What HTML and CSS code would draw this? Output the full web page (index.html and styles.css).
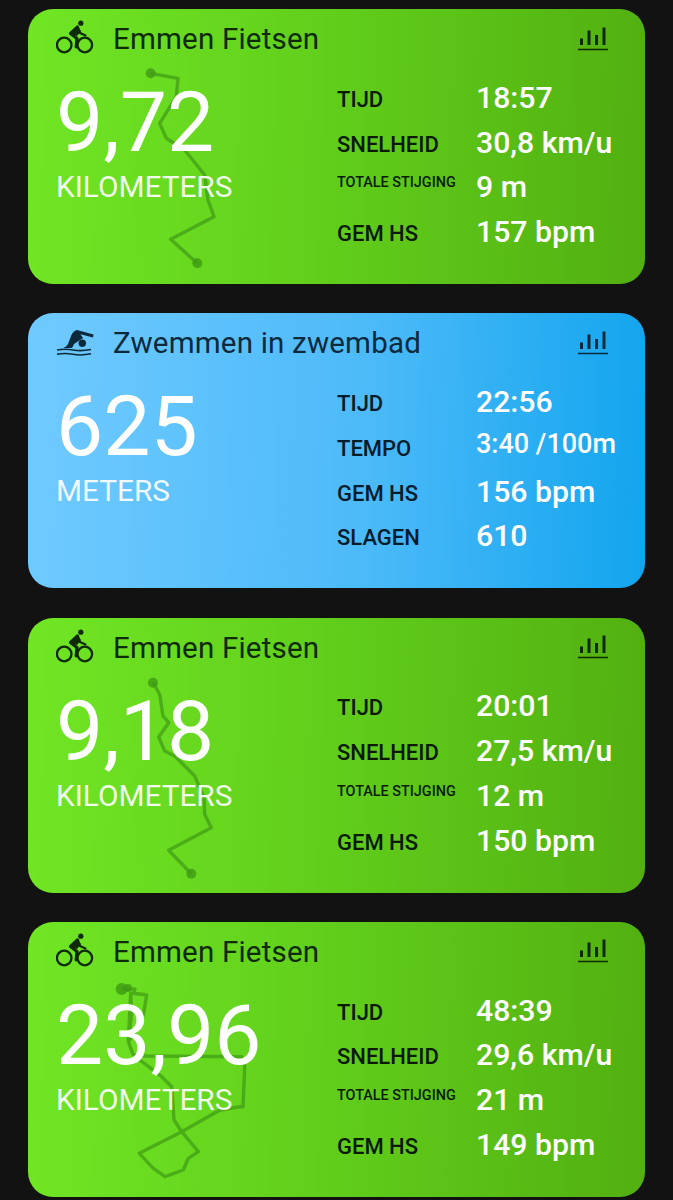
FILE: index.html
```html
<!DOCTYPE html>
<html lang="en">
	<head>
		<meta charset="utf-8">
		<title>Activiteiten</title>
		<link rel="stylesheet" href="styles.css">
	</head>
	<body>
		<svg class="defs" width="0" height="0">
			<symbol id="bike" viewBox="0 0 38 34">
				<circle cx="8.2" cy="25" r="7.3" fill="none" stroke="currentColor" stroke-width="2.3"/>
				<circle cx="28.8" cy="25" r="7.3" fill="none" stroke="currentColor" stroke-width="2.3"/>
				<circle cx="24.8" cy="3.2" r="2.6" fill="currentColor"/>
				<path d="M21.5 7 L14.5 13.5 L21 18.5 L20.2 27" fill="none" stroke="currentColor" stroke-width="3.2" stroke-linejoin="round" stroke-linecap="round"/>
				<path d="M22 7.5 L24 13 L29.5 15.5" fill="none" stroke="currentColor" stroke-width="2.2" stroke-linecap="round" stroke-linejoin="round"/>
				<path d="M21.5 7 L16 14 L21 16 L25 11 Z" fill="currentColor"/>
			</symbol>
			<symbol id="swim" viewBox="0 0 38 34">
				<circle cx="26.3" cy="19.3" r="3.7" fill="currentColor"/>
				<path d="M7.5 24 Q11 22.5 12 20 L15 12 Q17 7 21 6 L37.5 10.5 L37 13.5 L24.5 10.2 L27 14 L18 20 Q17 23 15.5 24 Z" fill="currentColor"/>
				<path d="M1 26 Q9 24.5 17 26 T35 25.5 M1 30.3 Q9 28.8 17 30.3 T35 29.8" fill="none" stroke="currentColor" stroke-width="1.6"/>
			</symbol>
			<symbol id="chart" viewBox="0 0 30 25">
				<path d="M3.5 11.5 V18 M11 3.5 V18 M18.5 8 V18 M26 0.5 V18" fill="none" stroke="currentColor" stroke-width="3"/>
				<path d="M0 22.5 H30" fill="none" stroke="currentColor" stroke-width="1.6"/>
			</symbol>
		</svg>

		<div class="list">

			<div class="card card-bike">
				<svg class="route" viewBox="0 0 617 275">
					<circle cx="122.7" cy="64.3" r="5"/>
					<circle cx="169.3" cy="254.3" r="5"/>
					<polyline points="122.7,64.3 150,69.3 148.3,87.7 131.7,114.3 138.3,129.3 156.7,141 176.7,166 180,191 186,207.7 142.7,230.3 169.3,254.3"/>
				</svg>
				<div class="head">
					<svg class="sport-icon"><use href="#bike"/></svg>
					<span class="title">Emmen Fietsen</span>
					<svg class="chart-icon"><use href="#chart"/></svg>
				</div>
				<div class="main">
					<div class="total">
						<div class="number">9,72</div>
						<div class="unit">KILOMETERS</div>
					</div>
					<div class="stats">
						<span class="label">TIJD</span><span class="value">18:57</span>
						<span class="label">SNELHEID</span><span class="value">30,8 km/u</span>
						<span class="label small">TOTALE STIJGING</span><span class="value">9 m</span>
						<span class="label">GEM HS</span><span class="value">157 bpm</span>
					</div>
				</div>
			</div>

			<div class="card card-swim">
				<div class="head">
					<svg class="sport-icon"><use href="#swim"/></svg>
					<span class="title">Zwemmen in zwembad</span>
					<svg class="chart-icon"><use href="#chart"/></svg>
				</div>
				<div class="main">
					<div class="total">
						<div class="number">625</div>
						<div class="unit">METERS</div>
					</div>
					<div class="stats">
						<span class="label">TIJD</span><span class="value">22:56</span>
						<span class="label">TEMPO</span><span class="value tight">3:40 /100m</span>
						<span class="label">GEM HS</span><span class="value">156 bpm</span>
						<span class="label">SLAGEN</span><span class="value">610</span>
					</div>
				</div>
			</div>

			<div class="card card-bike">
				<svg class="route" viewBox="0 0 617 275">
					<circle cx="125" cy="64.7" r="5"/>
					<circle cx="163.3" cy="255.7" r="5"/>
					<polyline points="125,64.7 131.7,76.3 135,98 140.7,104.7 130.7,119 136.7,133 146.7,138 166.7,158 176,179.7 176.7,196.3 183.3,209.7 140.7,232.3 163.3,255.7"/>
				</svg>
				<div class="head">
					<svg class="sport-icon"><use href="#bike"/></svg>
					<span class="title">Emmen Fietsen</span>
					<svg class="chart-icon"><use href="#chart"/></svg>
				</div>
				<div class="main">
					<div class="total">
						<div class="number">9,18</div>
						<div class="unit">KILOMETERS</div>
					</div>
					<div class="stats">
						<span class="label">TIJD</span><span class="value">20:01</span>
						<span class="label">SNELHEID</span><span class="value">27,5 km/u</span>
						<span class="label small">TOTALE STIJGING</span><span class="value">12 m</span>
						<span class="label">GEM HS</span><span class="value">150 bpm</span>
					</div>
				</div>
			</div>

			<div class="card card-bike">
				<svg class="route" viewBox="0 0 617 275">
					<circle cx="93.7" cy="67" r="6"/>
					<circle cx="100" cy="66" r="4"/>
					<polyline points="93.7,67 107,67 105.3,71.3 118.7,73 115.3,93 106,112 100.3,119.7 103.7,91.3 102.7,71.3 100.3,119.7 105.3,133 133.7,154.7 143.7,164.7 146,198 153.7,209.7 170.3,229.7 160.3,236.3 155.3,248 137,254.7 125.3,246.3 111.3,231.3 153.7,209.7 192,188 212,184.7 215,184.7 216.7,144.7 213.3,134.7 118.7,134 105.3,133"/>
				</svg>
				<div class="head">
					<svg class="sport-icon"><use href="#bike"/></svg>
					<span class="title">Emmen Fietsen</span>
					<svg class="chart-icon"><use href="#chart"/></svg>
				</div>
				<div class="main">
					<div class="total">
						<div class="number">23,96</div>
						<div class="unit">KILOMETERS</div>
					</div>
					<div class="stats">
						<span class="label">TIJD</span><span class="value">48:39</span>
						<span class="label">SNELHEID</span><span class="value">29,6 km/u</span>
						<span class="label small">TOTALE STIJGING</span><span class="value">21 m</span>
						<span class="label">GEM HS</span><span class="value">149 bpm</span>
					</div>
				</div>
			</div>

		</div>
	</body>
</html>
```
FILE: styles.css
```css
html, body {
	margin: 0;
	height: 1200px;
	overflow: hidden;
	background-color: #121212;
	font-family: Roboto, sans-serif;
}

.defs {
	position: absolute;
}

.list {
	display: flex;
	flex-direction: column;
	gap: 29.3px;
	padding: 9px 28px 0;
}

.card {
	position: relative;
	box-sizing: border-box;
	flex: none;
	height: 275px;
	border-radius: 25px;
	padding: 0 28px;
	overflow: hidden;
}

.card-bike {
	background: linear-gradient(92deg, #70e624 0%, #62d01c 45%, #52b011 100%);
	color: #0f2a08;
}

.card-swim {
	background: linear-gradient(92deg, #70caff 0%, #4cbaf8 55%, #12a5ee 100%);
	color: #0d2a3c;
}

.route {
	position: absolute;
	left: 0;
	top: 0;
	width: 617px;
	height: 275px;
}

.route polyline {
	fill: none;
	stroke: #3f9a14;
	stroke-width: 3.4;
	stroke-linejoin: round;
	opacity: 0.7;
}

.route circle {
	fill: #3f9a14;
	opacity: 0.8;
}

.head {
	position: relative;
	display: flex;
	align-items: center;
	height: 60px;
}

.sport-icon {
	width: 38px;
	height: 34px;
	margin-right: 19px;
	margin-top: -4px;
}

.title {
	flex: 1;
	font-size: 29.5px;
	letter-spacing: 0.2px;
}

.chart-icon {
	width: 30px;
	height: 25px;
	margin-right: 9px;
}

.main {
	position: relative;
	display: flex;
}

.total {
	width: 281px;
	color: white;
}

.number {
	font-size: 84px;
	line-height: 94px;
	margin-top: 7px;
}

.unit {
	font-size: 29.8px;
	line-height: 34px;
	color: rgba(255, 255, 255, 0.92);
}

.stats {
	display: grid;
	grid-template-columns: 139px auto;
	grid-auto-rows: 44.7px;
	align-items: center;
	margin-top: 6px;
}

.label {
	font-size: 22px;
	font-weight: 500;
	color: #0a1a05;
	padding-top: 4px;
}

.card-swim .label {
	color: #071c2a;
}

.label.small {
	font-size: 14.4px;
	padding-top: 0;
	padding-bottom: 8px;
}

.value {
	font-size: 30.2px;
	font-weight: 500;
	color: white;
}

.value.tight {
	font-size: 27px;
	margin-bottom: 5px;
}
```
